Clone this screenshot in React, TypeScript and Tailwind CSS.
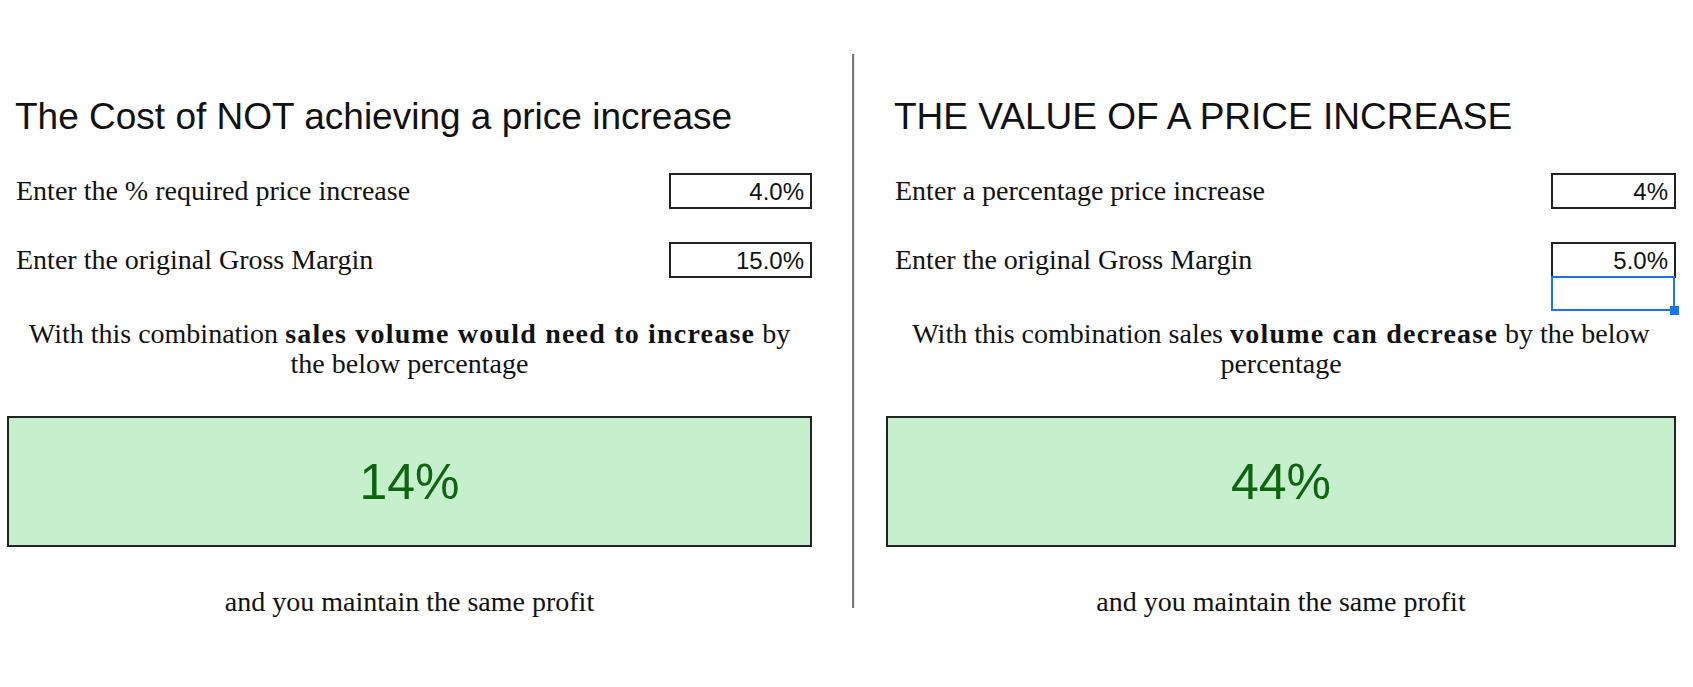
import React from 'react';

const sans = { fontFamily: '"Liberation Sans", Arial, sans-serif' };
const serif = { fontFamily: '"Liberation Serif", "Times New Roman", serif' };

type Row = { label: string; value: string };

function InputRow({ row, boxWidth, selected }: { row: Row; boxWidth: string; selected?: boolean }) {
  return (
    <div className="flex h-[36px] items-center justify-between">
      <span className="pl-[9px] text-[28px] leading-[36px] text-[#111]" style={serif}>
        {row.label}
      </span>
      <div className={`relative ${boxWidth}`}>
        <div
          className="h-[36px] border-2 border-[#222] bg-white pr-[6px] pt-[2px] text-right text-[24px] leading-[29px] text-[#111]"
          style={sans}
        >
          {row.value}
        </div>
        {selected && (
          <div className="absolute left-0 top-[34px] h-[35px] w-[124px] border-2 border-[#1a73e8]">
            <div className="absolute bottom-[-6px] right-[-6px] h-[9px] w-[9px] bg-[#1a73e8]" />
          </div>
        )}
      </div>
    </div>
  );
}

function Panel({
  title,
  rows,
  boxWidth,
  sentence,
  result,
  width,
  selectLast,
}: {
  title: string;
  rows: Row[];
  boxWidth: string;
  sentence: React.ReactNode;
  result: string;
  width: string;
  selectLast?: boolean;
}) {
  return (
    <div className={`${width} pt-[43px]`}>
      <h1 className="pl-[8px] text-[37px] leading-[40px] text-[#111]" style={sans}>
        {title}
      </h1>
      <div className="mt-[36px] flex flex-col gap-[33px]">
        {rows.map((row, i) => (
          <InputRow
            key={i}
            row={row}
            boxWidth={boxWidth}
            selected={selectLast && i === rows.length - 1}
          />
        ))}
      </div>
      <p className="mt-[41px] text-center text-[28px] leading-[30px] text-[#111]" style={serif}>
        {sentence}
      </p>
      <div className="mt-[37px] flex h-[131px] items-center justify-center border-2 border-[#222] bg-[#c6efce]">
        <span className="text-[50px] leading-none text-[#0f650f]" style={sans}>
          {result}
        </span>
      </div>
      <p className="mt-[40px] text-center text-[28px] leading-[30px] text-[#111]" style={serif}>
        and you maintain the same profit
      </p>
    </div>
  );
}

export default function App() {
  return (
    <div className="h-[687px] w-[1693px] overflow-hidden bg-white">
      <div className="flex items-start pl-[7px] pt-[54px]">
        <Panel
          width="w-[805px]"
          title="The Cost of NOT achieving a price increase"
          boxWidth="w-[143px]"
          rows={[
            { label: 'Enter the % required price increase', value: '4.0%' },
            { label: 'Enter the original Gross Margin', value: '15.0%' },
          ]}
          sentence={
            <>
              With this combination <b className="tracking-[1.2px]">sales volume would need to increase</b> by
              <br />
              the below percentage
            </>
          }
          result="14%"
        />
        <div className="ml-[40px] h-[554px] w-[2px] bg-[#7a7a7a] shadow-[1px_0_0_#e4e4e4]" />
        <div className="ml-[32px]">
          <Panel
            width="w-[790px]"
            title="THE VALUE OF A PRICE INCREASE"
            boxWidth="w-[125px]"
            rows={[
              { label: 'Enter a percentage price increase', value: '4%' },
              { label: 'Enter the original Gross Margin', value: '5.0%' },
            ]}
            sentence={
              <>
                With this combination sales <b className="tracking-[1.2px]">volume can decrease</b> by the below
                <br />
                percentage
              </>
            }
            result="44%"
            selectLast
          />
        </div>
      </div>
    </div>
  );
}
